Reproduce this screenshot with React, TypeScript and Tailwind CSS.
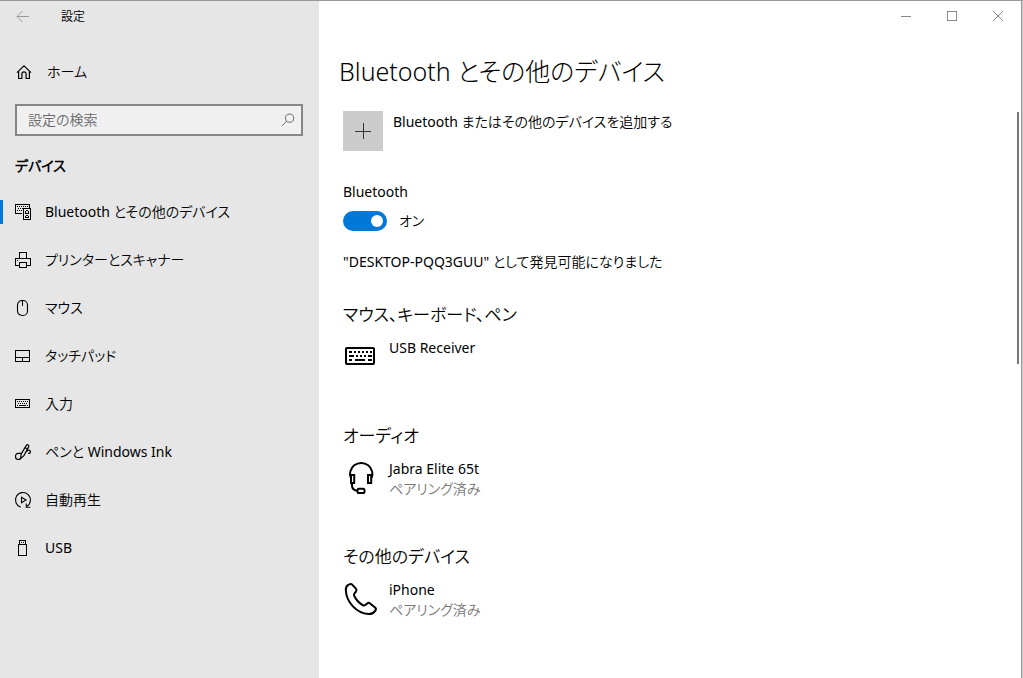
import { useState } from "react";
import type { ReactNode } from "react";

function Icon({ children, crisp = false, size = 16 }: { children: ReactNode; crisp?: boolean; size?: number }) {
  return (
    <svg
      width={size}
      height={size}
      viewBox={`0 0 ${size} ${size}`}
      fill="none"
      stroke="currentColor"
      strokeWidth="1"
      shapeRendering={crisp ? "crispEdges" : "auto"}
      className="shrink-0 overflow-visible"
      aria-hidden="true"
    >
      {children}
    </svg>
  );
}

const BackIcon = () => (
  <Icon>
    <path d="M2 7.5h12M7.5 2 2 7.5 7.5 13" />
  </Icon>
);

const HomeIcon = () => (
  <Icon>
    <path d="M1 8.6 8 1.8l7 6.8M2.6 7.5v7h3.3v-4.6a2.1 2.1 0 0 1 4.2 0v4.6h3.3v-7" strokeWidth="1.2" />
  </Icon>
);

const SearchIcon = () => (
  <Icon>
    <circle cx="9.6" cy="6.2" r="4.1" />
    <path d="M6.7 9.2 1.8 14" />
  </Icon>
);

const DevicesIcon = () => (
  <Icon crisp>
    <path d="M7 9.5H.5v-9h14v3" />
    <path d="M2 2.5h12M3 4.5h5M2 6.5h5" strokeDasharray="1 1" />
    <path d="M8.5 4.5h7v11h-7z" />
    <path d="M11 6.5h2M10.5 7v3M13.5 7v3M11 9.5h2M11 11.5h2M10.5 12v2M13.5 12v2M11 13.5h2" />
  </Icon>
);

const PrinterIcon = () => (
  <Icon crisp>
    <path d="M4.5 6V.5h7V6M4 13.5H.5v-7h15v7H12M4.5 10.5h7v5h-7zM2 8.5h1" />
  </Icon>
);

const MouseIcon = () => (
  <Icon>
    <rect x="2.5" y=".5" width="10" height="15" rx="4.5" strokeWidth="1.1" />
    <path d="M7.5 1v5" />
  </Icon>
);

const TouchpadIcon = () => (
  <Icon crisp>
    <path d="M.5 2.5h14v11H.5zM1 9.5h13M7.5 10v3" />
  </Icon>
);

const TypingIcon = () => (
  <Icon crisp>
    <path d="M.5 3.5h14v8H.5z" />
    <path d="M2 5.5h12M3 7.5h10" strokeDasharray="1 1" />
    <path d="M2 9.5h1M4 9.5h7M12 9.5h1" />
  </Icon>
);

const PenIcon = () => (
  <Icon>
    <g strokeWidth="1.2">
      <path d="M6.2 9.3H3.4C1.7 9.3.5 10.7.5 12.5s1.2 3 2.6 3c.9 0 1.700-.4 2.300-1M11.500 7.700c1-1.300 2.200-1.900 3.200-1.300 1.100.7.900 2.300-.2 3h-1.300" />
      <path d="M5.500 14.600 6.300 9.600 11.200 1.600c.5-.8 1.200-1.200 2-.7s.9 1.300.4 2.200L8.900 11.600z" />
      <path d="M10 3.600l2.600 1.600" />
    </g>
  </Icon>
);

const AutoplayIcon = () => (
  <Icon>
    <path d="M5.8 15.2A7.5 7.5 0 1 1 12 14.3" strokeWidth="1.1" />
    <path d="M11.3 11.5v3.8h4M6.5 5.2v5.6L11 8z" strokeWidth="1.1" />
  </Icon>
);

const UsbIcon = () => (
  <Icon crisp>
    <path d="M4.5 4V.5h6V4M3.5 4.5h8v11h-8zM6 2.5h1M8 2.5h1" />
  </Icon>
);

const KeyboardDeviceIcon = () => (
  <Icon size={36}>
    <rect x="3" y="10" width="28" height="16" rx="1" strokeWidth="2" />
    <g strokeWidth="2" shapeRendering="crispEdges">
      <path d="M6 14h3M11 14h2M15 14h2M19 14h2M23 14h2M27 14h2" />
      <path d="M6 18h5M13 18h2M17 18h2M21 18h2M25 18h4M6 22h3M12 22h10M25 22h4" />
    </g>
  </Icon>
);

const HeadsetIcon = () => (
  <Icon size={36}>
    <g strokeWidth="2">
      <path d="M8 19C6.5 16.5 7 13.5 7.3 12.5 8.5 7.3 13 4 18.2 4s9.7 3.3 10.9 8.500c.3 1 .8 4-.7 6.500" />
      <rect x="8" y="16" width="3.2" height="8" />
      <rect x="25" y="16" width="3.2" height="8" />
      <path d="M9 24v2.5c0 2.9 1.700 4.700 5 5.200" />
      <rect x="14.5" y="29.7" width="7" height="4.3" rx="1.6" />
    </g>
  </Icon>
);

const PhoneIcon = () => (
  <Icon size={36}>
    <path
      d="M5.300 4.800 7 4.100c.8-.3 1.600-.1 2.200.5l3.700 4c.8.900.8 2 .1 2.900l-1.500 1.800c-.7.900-.7 1.700-.2 2.700 1.800 3.900 4.600 6.800 8.300 9.100 1 .6 1.900.6 2.700-.1l1.900-1.600c.9-.8 2-.7 2.900.1l5 4.100c1 .900 1 2 .3 3-1.700 2.500-3.900 3.700-6.900 3.500C13.500 33 3.500 22.500 2.800 10.200 2.700 7.700 3.500 5.900 5.300 4.800z"
      strokeWidth="2"
      strokeLinejoin="round"
    />
  </Icon>
);

const navItems = [
  { label: "Bluetooth とその他のデバイス", icon: <DevicesIcon /> },
  { label: "プリンターとスキャナー", icon: <PrinterIcon /> },
  { label: "マウス", icon: <MouseIcon /> },
  { label: "タッチパッド", icon: <TouchpadIcon /> },
  { label: "入力", icon: <TypingIcon /> },
  { label: "ペンと Windows Ink", icon: <PenIcon /> },
  { label: "自動再生", icon: <AutoplayIcon /> },
  { label: "USB", icon: <UsbIcon /> },
];

const groups = [
  { title: "マウス、キーボード、ペン", name: "USB Receiver", status: "", icon: <KeyboardDeviceIcon /> },
  { title: "オーディオ", name: "Jabra Elite 65t", status: "ペアリング済み", icon: <HeadsetIcon /> },
  { title: "その他のデバイス", name: "iPhone", status: "ペアリング済み", icon: <PhoneIcon /> },
];

function Sidebar() {
  const [active, setActive] = useState(0);
  return (
    <aside className="w-[319px] shrink-0 bg-[#e6e6e6]">
      <header className="flex h-[31px] items-center gap-[30px] pl-[15px]">
        <button type="button" aria-label="戻る" className="text-[#999999]">
          <BackIcon />
        </button>
        <span className="text-xs">設定</span>
      </header>
      <a href="#home" className="mt-5 flex h-10 items-center gap-[15px] pl-4">
        <HomeIcon />
        ホーム
      </a>
      <label className="mt-3 mr-4 ml-[15px] flex h-8 items-center border-2 border-[#868686] bg-[#f0f0f0] pr-[5px] text-[#6a6a6a]">
        <span className="flex-1">
          <input
            type="text"
            aria-label="設定の検索"
            placeholder="設定の検索"
            className="h-7 w-full bg-transparent pl-[11px] leading-7 outline-none placeholder:text-[#6a6a6a]"
          />
        </span>
        <SearchIcon />
      </label>
      <h2 className="mt-4 pl-[15px] leading-7 font-bold">デバイス</h2>
      <nav className="mt-2">
        <ul>
          {navItems.map((item, i) => (
            <li key={item.label}>
              <a
                href={`#page-${i}`}
                onClick={() => setActive(i)}
                aria-current={i === active ? "page" : undefined}
                className="flex h-12 items-center"
              >
                <span className={i === active ? "h-6 w-[3px] bg-[#0078d7]" : "h-6 w-[3px]"} />
                <span className="ml-3 flex items-center gap-3.5">
                  {item.icon}
                  {item.label}
                </span>
              </a>
            </li>
          ))}
        </ul>
      </nav>
    </aside>
  );
}

function WindowControls() {
  return (
    <div className="flex h-[30px] justify-end text-[#888888]">
      <button type="button" aria-label="最小化" className="flex w-[46px] items-center justify-center">
        <Icon size={10} crisp>
          <path d="M0 5.5h10" />
        </Icon>
      </button>
      <button type="button" aria-label="最大化" className="flex w-[46px] items-center justify-center">
        <Icon size={10} crisp>
          <path d="M.5.5h9v9h-9z" />
        </Icon>
      </button>
      <button type="button" aria-label="閉じる" className="flex w-[46px] items-center justify-center">
        <Icon size={10}>
          <path d="M0 0l10 10M10 0 0 10" />
        </Icon>
      </button>
    </div>
  );
}

export default function App() {
  const [on, setOn] = useState(true);
  return (
    <div className="relative flex min-h-screen border-t border-[#999999] bg-white font-['Noto_Sans','Noto_Sans_CJK_JP_DemiLight','Noto_Sans_CJK_JP',sans-serif] text-sm text-black [font-feature-settings:'palt']">
      <Sidebar />
      <div className="min-w-0 flex-1">
        <WindowControls />
        <main className="pl-6">
          <h1 className="mt-6 -ml-1 font-['Noto_Sans','Noto_Sans_CJK_JP',sans-serif] text-[25px] leading-8 font-light">
            Bluetooth とその他のデバイス
          </h1>
          <button type="button" className="mt-6 flex items-start gap-[10px] text-left leading-[22px]">
            <span className="flex size-10 items-center justify-center bg-[#cccccc] text-[#333333]">
              <Icon crisp>
                <path d="M0 8.5h16M8.500 0v16" />
              </Icon>
            </span>
            Bluetooth またはその他のデバイスを追加する
          </button>
          <h2 id="bluetooth-label" className="mt-[30px] leading-[22px]">
            Bluetooth
          </h2>
          <label className="mt-2 flex w-fit items-center gap-3 leading-5">
            <span className="flex h-5 w-11 items-center rounded-full bg-[#0078d7] px-1 has-[:not(:checked)]:bg-[#999999]">
              <input
                type="checkbox"
                role="switch"
                aria-labelledby="bluetooth-label"
                checked={on}
                onChange={(e) => setOn(e.target.checked)}
                className="size-3 appearance-none rounded-full bg-white checked:ml-6"
              />
            </span>
            {on ? "オン" : "オフ"}
          </label>
          <p className="mt-5 leading-[22px]">"DESKTOP-PQQ3GUU" として発見可能になりました</p>
          <div className="mt-7 flex flex-col gap-[23px]">
            {groups.map((g) => (
              <section key={g.title}>
                <h2 className="text-[17px] leading-7">{g.title}</h2>
                <div className="mt-[9px] flex min-h-[61px] items-start gap-[10px] leading-5">
                  {g.icon}
                  <div>
                    <p>{g.name}</p>
                    {g.status && <p className="text-[#767676]">{g.status}</p>}
                  </div>
                </div>
              </section>
            ))}
          </div>
        </main>
      </div>
      <div className="w-[2px] shrink-0 border-r border-l border-r-[#cccccc] border-l-[#999999]" />
      <div className="absolute top-[111px] right-1 h-[252px] w-[2px] bg-[#767676]" />
    </div>
  );
}
